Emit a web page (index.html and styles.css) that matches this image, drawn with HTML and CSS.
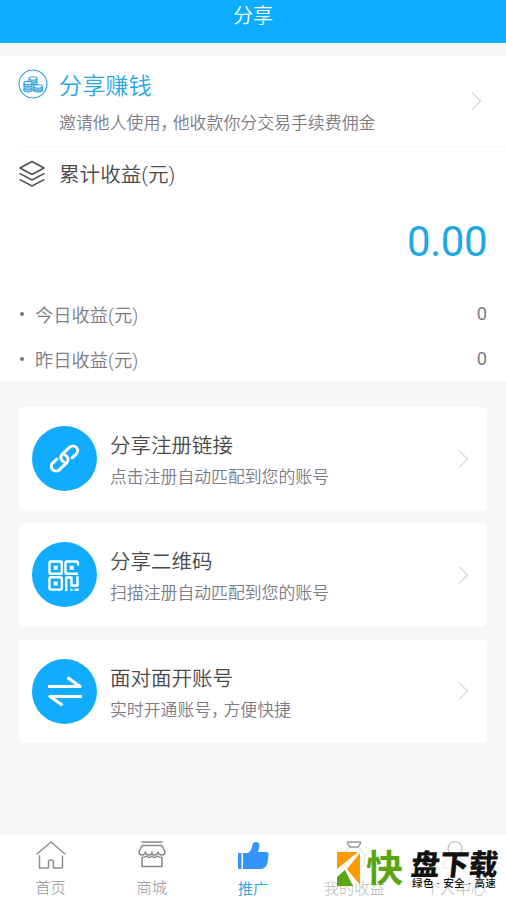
FILE: index.html
```html
<!DOCTYPE html>
<html lang="zh-CN">
<head>
<meta charset="utf-8">
<title>分享</title>
<link rel="stylesheet" href="styles.css">
</head>
<body>
<div class="app">
  <header class="header">分享</header>
  <main class="content">
    <section class="summary">
      <div class="promo">
        <svg class="promo-icon" width="30" height="30" viewBox="0 0 30 30" fill="none" stroke="#31a0dc">
          <circle cx="15" cy="15" r="14" stroke-width="1.1"/>
          <g fill="#a5d8f5" stroke-width="1.1">
            <path d="M11 9.500v6h8v-6"/><ellipse cx="15" cy="9.500" rx="4" ry="1.700" fill="#fff"/><path d="M11 12.500q4 2 8 0"/>
            <path d="M6 14v8q4 2 8 0v-8"/><ellipse cx="10" cy="14" rx="4" ry="1.600" fill="#fff"/><path d="M6 17q4 2 8 0M6 19.500q4 2 8 0"/>
            <path d="M15.500 17.500v4.500q4.500 2 9 0v-4.500"/><ellipse cx="20" cy="17.500" rx="4.400" ry="1.700" fill="#fff"/><path d="M15.500 20.200q4.500 2 9 0"/>
          </g>
        </svg>
        <div class="promo-text">
          <h1>分享赚钱</h1>
          <p>邀请他人使用<span class="comma">，</span>他收款你分交易手续费佣金</p>
        </div>
        <svg class="chevron" width="12" height="20" viewBox="0 0 12 20"><path d="M1 1.500 9.500 10 1 18.500"/></svg>
      </div>
      <div class="total-title">
        <svg width="28" height="28" viewBox="0 0 28 28" fill="none" stroke="#505050" stroke-width="1.500" stroke-linejoin="round" stroke-linecap="round">
          <path d="M14 1.500 26 8 14 14.500 2 8zM2 13.700 14 20l12-6.300M2 19.700 14 26l12-6.300"/>
        </svg>
        <h2>累计收益(元)</h2>
      </div>
      <div class="amount">0.00</div>
      <div class="row"><i class="dot"></i><span>今日收益(元)</span><b>0</b></div>
      <div class="row"><i class="dot"></i><span>昨日收益(元)</span><b>0</b></div>
    </section>
    <section class="cards">
      <div class="card">
        <div class="badge">
          <svg width="65" height="65" viewBox="0 0 65 65" fill="none" stroke="#fff" stroke-width="3" stroke-linecap="round" stroke-linejoin="round">
            <g transform="translate(32.500 32.500) rotate(-43)">
              <path id="link" d="M6 4.700h5.500a4.700 4.700 0 0 0 0-9.400H1.500a4.700 4.700 0 0 0-4.200 6.800"/>
              <use href="#link" transform="rotate(180)"/>
            </g>
          </svg>
        </div>
        <div class="card-text"><h3>分享注册链接</h3><p>点击注册自动匹配到您的账号</p></div>
        <svg class="chevron" width="12" height="20" viewBox="0 0 12 20"><path d="M1 1.500 9.500 10 1 18.500"/></svg>
      </div>
      <div class="card">
        <div class="badge">
          <svg width="65" height="65" viewBox="0 0 65 65" fill="none" stroke="#fff" stroke-width="2.400" stroke-linejoin="round">
            <rect x="17.500" y="19.500" width="12.300" height="12.300" rx="1.500"/>
            <rect x="17.500" y="35.300" width="12.300" height="12.300" rx="1.500"/>
            <path d="M46 23.500v-2.500q0-1.500-1.500-1.500H35q-1.500 0-1.500 1.500v9.300q0 1.500 1.500 1.500h11"/>
            <path d="M34.200 49V35.500h5.300V43.500H45.500V34.300M38.500 47.700h2M42.500 47.700h4.200"/>
            <path fill="#fff" stroke="none" d="M21.700 23.700h4v4h-4zM21.700 39.500h4v4h-4zM37.700 23.700h4v4h-4z"/>
          </svg>
        </div>
        <div class="card-text"><h3>分享二维码</h3><p>扫描注册自动匹配到您的账号</p></div>
        <svg class="chevron" width="12" height="20" viewBox="0 0 12 20"><path d="M1 1.500 9.500 10 1 18.500"/></svg>
      </div>
      <div class="card">
        <div class="badge">
          <svg width="65" height="65" viewBox="0 0 65 65" fill="none" stroke="#fff" stroke-width="3.200" stroke-linejoin="round">
            <path d="M16 27.500h32L35.500 18.500M50 37.500H18L30.500 46.200"/>
          </svg>
        </div>
        <div class="card-text"><h3>面对面开账号</h3><p>实时开通账号<span class="comma">，</span>方便快捷</p></div>
        <svg class="chevron" width="12" height="20" viewBox="0 0 12 20"><path d="M1 1.500 9.500 10 1 18.500"/></svg>
      </div>
    </section>
  </main>
  <nav class="tabs">
    <div class="tab">
      <svg width="32" height="32" viewBox="0 0 32 32" fill="none" stroke="#909090" stroke-width="1.500" stroke-linecap="round" stroke-linejoin="round">
        <path d="M2 15 16 3l14 12M4.500 17v12h9v-6q0-2 2.500-2t2.500 2v6h9V17"/>
      </svg>
      <span>首页</span>
    </div>
    <div class="tab">
      <svg width="32" height="32" viewBox="0 0 32 32" fill="none" stroke="#888" stroke-width="1.500" stroke-linecap="round" stroke-linejoin="round">
        <path d="M6 3h20M6 6.500h20l3 6.500q0 3-3 3-3.500 0-4-3-.5 3-3.500 3T16 13q0 3-3 3t-3.500-3q-.5 3-3.500 3-3 0-3-3zM6 18.500v9h20v-9q-3 0-4.500-1.500-3 3-5.500 0-3 3-5.500 0Q8.500 18.500 6 18.500"/>
      </svg>
      <span>商城</span>
    </div>
    <div class="tab active">
      <svg width="32" height="32" viewBox="0 0 32 32" fill="#3394fb">
        <path d="M1 14h3.500v16H1zM6 14h5c3-1.500 4-5 4.500-8.500Q16 3 19 3c3 0 4 3 3 6l-1 4h8q3 0 2.500 3.500l-1 7q-1 5.500-6.500 6.500H6z"/>
      </svg>
      <span>推广</span>
    </div>
    <div class="tab faded">
      <svg width="32" height="32" viewBox="0 0 32 32" fill="none" stroke="#e4e4e4" stroke-width="1.300">
        <path d="M12 8Q4 15 5 22q1 7 11 7t11-7q1-7-7-14"/><path stroke="#999" d="M9.500 3h13v1.500L20 8h-8L9.500 4.500z"/>
      </svg>
      <span>我的收益</span>
    </div>
    <div class="tab faded">
      <svg width="32" height="32" viewBox="0 0 32 32" fill="none" stroke="#bbb" stroke-width="1.200">
        <circle cx="16" cy="9.500" r="7"/><path stroke="#eee" d="M4 29q0-11 12-11t12 11z"/>
      </svg>
      <span>个人中心</span>
    </div>
    <div class="watermark">
      <svg width="25" height="34" viewBox="0 0 25 34">
        <path fill="#f90" d="M0 0h21L0 17zM23 1v32L10 17z"/>
        <path fill="#5aa514" d="m8 18 8 16H0v-9z"/>
      </svg>
      <span class="mark-kuai">快</span>
      <div class="mark-text"><strong>盘下载</strong><small>绿色 · 安全 · 高速</small></div>
    </div>
  </nav>
</div>
</body>
</html>
```
FILE: styles.css
```css
* { box-sizing: border-box; }
body, h1, h2, h3, p { margin: 0; font-weight: 350; }
body {
  font-family: Roboto, "Noto Sans CJK SC", sans-serif;
  background: #f7f7f7;
}
svg { display: block; flex: none; }
.app { height: 900px; display: flex; flex-direction: column; overflow: hidden; }
.header {
  height: 43px;
  padding-top: 1px;
  line-height: 30px;
  text-align: center;
  color: #fff;
  font-size: 20px;
  background: #0cadff;
}
.content { flex: 1; border-top: 1px solid #fff; padding-top: 12px; }
.summary { background: #fff; height: 325px; }
.promo {
  display: flex;
  height: 91px;
  margin-left: 18px;
  padding: 13px 23px 0 0;
  border-bottom: 1px solid #f7f7f7;
}
.promo-text { flex: 1; margin-left: 11px; }
.promo h1 { font-size: 23.2px; line-height: 34px; color: #28a7e0; }
.promo p { font-size: 16.9px; line-height: 24px; margin-top: 8px; color: #7c7b86; white-space: nowrap; }
.comma { letter-spacing: -4.5px; }
.chevron { fill: none; stroke: #dcdcdc; stroke-width: 1.5; }
.promo .chevron { margin-top: 22px; }
.total-title { display: flex; padding: 13px 0 0 18px; gap: 13px; height: 59px; }
.total-title h2 { font-size: 20.6px; line-height: 31px; color: #4a4a4a; }
.amount {
  height: 87px;
  padding-right: 19px;
  text-align: right;
  font-size: 42px;
  line-height: 71px;
  font-weight: 400;
  letter-spacing: -0.5px;
  color: #1ea8e2;
}
.row {
  display: flex;
  align-items: center;
  height: 45px;
  padding: 0 19px 4px 20px;
  font-size: 18.3px;
  color: #7c7b83;
}
.row b { margin-left: auto; font-weight: 400; }
.dot { width: 4px; height: 4px; border-radius: 50%; background: #777; margin-right: 11px; }
.cards { display: grid; gap: 13px; padding: 26px 19px 0; }
.card {
  display: flex;
  align-items: center;
  height: 103.3px;
  padding: 0 17px 0 13px;
  border-radius: 4px;
  background: #fff;
}
.badge { width: 65px; height: 65px; border-radius: 50%; background: #12acff; margin-right: 13px; }
.card-text { flex: 1; padding-top: 3px; }
.card h3 { font-size: 20.5px; line-height: 30px; color: #4a4a4a; }
.card p { font-size: 16.85px; line-height: 24px; margin-top: 4px; color: #7c7b86; }
.tabs {
  position: relative;
  height: 65px;
  display: grid;
  grid-template-columns: repeat(5, 1fr);
  background: #fff;
}
.tab { display: flex; flex-direction: column; align-items: center; padding-top: 4px; font-size: 15.3px; font-weight: 300; line-height: 24px; color: #929292; white-space: nowrap; }
.tab span { margin-top: 5px; }
.active { color: #2ba3e6; font-weight: 350; }
.active span { margin-top: 6px; }
.faded { color: #bbb; }
.faded span { margin-top: 6px; }
.watermark { position: absolute; left: 337px; top: 17px; display: flex; height: 40px; }
.mark-kuai { margin-left: 4px; font-size: 37px; line-height: 35px; font-weight: 700; color: #5aa514; }
.mark-text { margin-left: 8px; color: #111; }
.mark-text strong { display: block; font-size: 29px; line-height: 27px; font-weight: 900; transform: skewX(-6deg); }
.mark-text small { display: block; margin-left: 1px; font-size: 10.5px; line-height: 10px; font-weight: 500; letter-spacing: 0.4px; white-space: nowrap; }
```
